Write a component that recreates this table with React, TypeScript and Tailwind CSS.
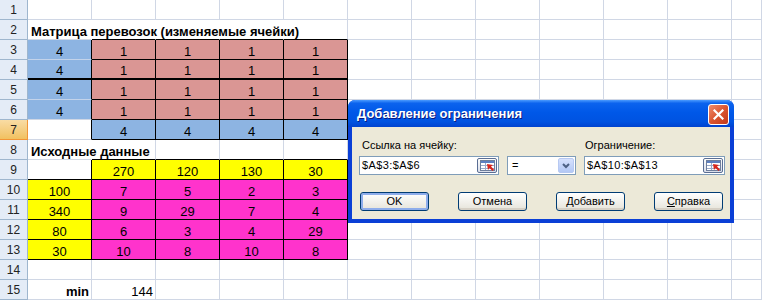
import React from 'react';

const G = 'border-r-[#D0D7E5] border-b-[#D0D7E5]';
const BLUE = 'bg-[#8DB4E2]';
const PINK = 'bg-[#DA9694]';
const YEL = 'bg-[#FFFF00]';
const MAG = 'bg-[#FF33CC]';

type CellDef = { t?: string; cls: string; align?: 'c' | 'l' | 'r'; bold?: boolean };

const gridRow = (n: number): CellDef[] => Array.from({ length: n }, () => ({ cls: G }));

// one entry per row: cells A..L
const ROWS: CellDef[][] = [
  gridRow(12),
  [
    { t: 'Матрица перевозок (изменяемые ячейки)', cls: 'border-r-transparent border-b-[#D0D7E5]', align: 'l', bold: true },
    { cls: 'border-r-transparent border-b-black' },
    { cls: 'border-r-transparent border-b-black' },
    { cls: 'border-r-transparent border-b-black' },
    { cls: 'border-r-[#D0D7E5] border-b-black' },
    ...gridRow(7),
  ],
  ...[0, 1, 2, 3].map((i) => [
    { t: '4', cls: `${BLUE} border-r-black ${i === 1 ? 'border-b-2 border-b-black' : i === 3 ? 'border-b-[#D0D7E5]' : 'border-b-[#C3D3EA]'}` },
    ...[0, 1, 2, 3].map(() => ({ t: '1', cls: `${PINK} border-r-black border-b-black ${i === 1 ? 'border-b-2' : ''}` })),
    ...gridRow(7),
  ]),
  [
    { cls: 'border-r-black border-b-[#D0D7E5]' },
    ...[0, 1, 2, 3].map(() => ({ t: '4', cls: `${BLUE} border-r-black border-b-black` })),
    ...gridRow(7),
  ],
  [
    { t: 'Исходные данные', cls: 'border-r-transparent border-b-[#D0D7E5]', align: 'l', bold: true },
    { cls: 'border-r-[#D0D7E5] border-b-black' },
    { cls: 'border-r-[#D0D7E5] border-b-black' },
    { cls: 'border-r-[#D0D7E5] border-b-black' },
    { cls: 'border-r-[#D0D7E5] border-b-black' },
    ...gridRow(7),
  ],
  [
    { cls: 'border-r-black border-b-black' },
    ...['270', '120', '130', '30'].map((t) => ({ t, cls: `${YEL} border-r-black border-b-black` })),
    ...gridRow(7),
  ],
  ...[
    ['100', '7', '5', '2', '3'],
    ['340', '9', '29', '7', '4'],
    ['80', '6', '3', '4', '29'],
    ['30', '10', '8', '10', '8'],
  ].map((r) => [
    { t: r[0], cls: `${YEL} border-r-black border-b-black` },
    ...r.slice(1).map((t) => ({ t, cls: `${MAG} border-r-black border-b-black` })),
    ...gridRow(7),
  ]),
  gridRow(12),
  [
    { t: 'min', cls: G, align: 'r', bold: true },
    { t: '144', cls: G, align: 'r' },
    ...gridRow(10),
  ],
];

function RefIcon() {
  return (
    <svg width="15" height="11" viewBox="0 0 15 11">
      <rect x="0.5" y="0.5" width="14" height="10" fill="#fff" stroke="#6E7E9C" />
      <rect x="1" y="1" width="13" height="2" fill="#5C7FC0" />
      <line x1="1" y1="5.5" x2="14" y2="5.5" stroke="#9AAACB" />
      <line x1="1" y1="8.5" x2="14" y2="8.5" stroke="#9AAACB" />
      <line x1="5.5" y1="3" x2="5.5" y2="10" stroke="#9AAACB" />
      <polygon points="7,4 13,5 11,6.5 14,9.5 12.5,11 9.5,8 8,10" fill="#D8261C" />
    </svg>
  );
}

function RefEdit({ value, width }: { value: string; width: string }) {
  return (
    <div className={`${width} h-[19px] bg-white border border-[#7F9DB9] flex items-center justify-between pl-[2px] pr-[1px]`}>
      <span className="text-[11px] leading-none tracking-[0.4px] text-black">{value}</span>
      <div className="w-[20px] h-[15px] rounded-[2px] border border-[#5A6E94] bg-gradient-to-b from-[#FDFDFB] to-[#D9DEEA] flex items-center justify-center">
        <RefIcon />
      </div>
    </div>
  );
}

function XpButton({ children, def }: { children: React.ReactNode; def?: boolean }) {
  return (
    <div
      className={`w-[69px] h-[19px] rounded-[3px] border border-[#003C74] bg-gradient-to-b from-white to-[#E6E4DA] flex items-center justify-center text-[11px] text-black ${
        def ? 'shadow-[inset_0_0_0_2px_#8EADEB]' : 'shadow-[inset_0_-2px_0_#D6D0C5]'
      }`}
    >
      {children}
    </div>
  );
}

export default function App() {
  return (
    <div className="relative w-[762px] h-[300px] overflow-hidden bg-white font-['Liberation_Sans',Arial,sans-serif]">
      <div className="grid grid-cols-[28px_repeat(11,64px)_1fr]">
        {ROWS.map((row, ri) => (
          <React.Fragment key={ri}>
            <div
              className={`h-[20px] border-r border-b flex items-center justify-center text-[12px] text-[#222] ${
                ri === 6
                  ? 'bg-gradient-to-b from-[#F9DCA4] to-[#F1C15F] border-r-[#F29536] border-b-[#F29536]'
                  : 'bg-[#E4ECF7] border-r-[#9EB6CE] border-b-[#9EB6CE]'
              }`}
            >
              {ri + 1}
            </div>
            {row.map((c, ci) => (
              <div
                key={ci}
                className={`h-[20px] border-r border-b flex items-end leading-[15px] whitespace-nowrap text-[13px] text-black ${
                  c.align === 'l' ? 'justify-start pl-[3px]' : c.align === 'r' ? 'justify-end pr-[2px]' : 'justify-center'
                } ${c.bold ? 'font-bold' : ''} ${c.cls}`}
              >
                {c.t}
              </div>
            ))}
          </React.Fragment>
        ))}
      </div>

      {/* Solver: add constraint dialog */}
      <div className="absolute left-[348px] top-[100px] w-[386px] rounded-t-[7px] overflow-hidden bg-[#0A3FD6]">
        <div className="h-[27px] flex items-center justify-between pl-[9px] pr-[5px] bg-[linear-gradient(to_bottom,#4A9BFF_0%,#0B63EE_12%,#0058E8_45%,#0053E1_80%,#0043CF_100%)]">
          <span className="text-white text-[13px] font-bold [text-shadow:1px_1px_0_#0A1A80] pt-[1px]">
            Добавление ограничения
          </span>
          <div className="w-[21px] h-[21px] mt-[2px] rounded-[3px] border border-white bg-gradient-to-br from-[#EE8C6D] via-[#DA5530] to-[#C2381A] flex items-center justify-center">
            <svg width="11" height="11" viewBox="0 0 11 11">
              <path d="M1.5 1.5 L9.5 9.5 M9.5 1.5 L1.5 9.5" stroke="#fff" strokeWidth="2.2" strokeLinecap="square" />
            </svg>
          </div>
        </div>
        <div className="mx-[4px] mb-[4px] h-[92px] bg-[#ECE9D8] flex flex-col">
          <div className="flex pt-[12px] h-[29px] text-[11px] text-black leading-[13px]">
            <span className="ml-[10px] w-[223px]">Ссылка на ячейку:</span>
            <span>Ограничение:</span>
          </div>
          <div className="flex items-center pl-[7px] gap-[8px]">
            <RefEdit value="$A$3:$A$6" width="w-[140px]" />
            <div className="w-[69px] h-[19px] bg-white border border-[#7F9DB9] flex items-center justify-between pl-[4px] pr-[1px]">
              <span className="text-[11px] leading-none">=</span>
              <div className="w-[16px] h-[15px] rounded-[2px] bg-gradient-to-b from-[#D6E1FD] to-[#B3C8F5] border border-[#B7C9F2] flex items-center justify-center">
                <svg width="8" height="6" viewBox="0 0 8 6">
                  <path d="M1 1 L4 4 L7 1" stroke="#4D6185" strokeWidth="2" fill="none" />
                </svg>
              </div>
            </div>
            <RefEdit value="$A$10:$A$13" width="w-[141px]" />
          </div>
          <div className="flex justify-between pl-[8px] pr-[7px] mt-[17px]">
            <XpButton def>OK</XpButton>
            <XpButton>Отмена</XpButton>
            <XpButton>
              <span className="underline">Д</span>обавить
            </XpButton>
            <XpButton>
              <span className="underline">С</span>правка
            </XpButton>
          </div>
        </div>
      </div>
    </div>
  );
}
